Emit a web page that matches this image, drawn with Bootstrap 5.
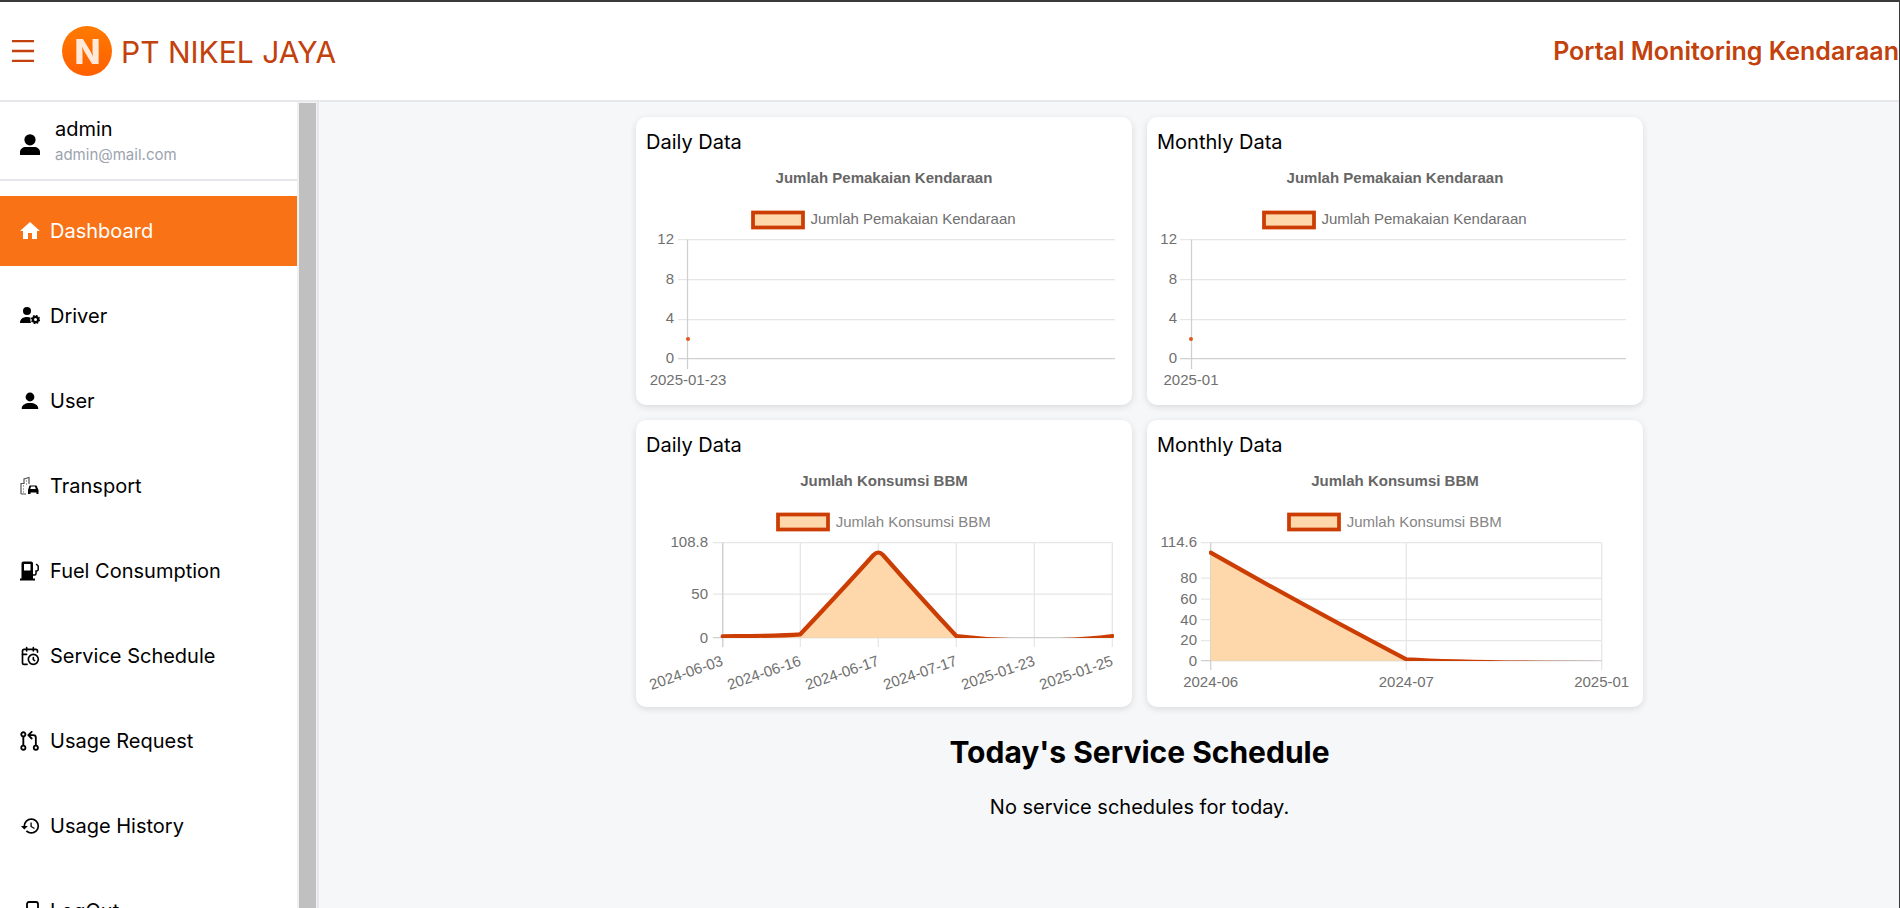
<!DOCTYPE html>
<html lang="en">
<head>
  <meta charset="UTF-8">
  <meta name="viewport" content="width=device-width, initial-scale=1.0">
  <title>Portal Monitoring Kendaraan</title>
  <link href="https://cdn.jsdelivr.net/npm/bootstrap@5.3.3/dist/css/bootstrap.min.css" rel="stylesheet">
  <style>
    html, body { height: 100%; overflow: hidden; }
    body { font-family: Inter, "Liberation Sans", sans-serif; color: #000; background: #f6f7f9; border-top: 2px solid #3a3a3a; border-right: 1px solid #3a3a3a; }
    .top-bar { height: 100px; background: #fff; border-bottom: 2px solid #e5e7eb; color: #c2410c; }
    .menu-btn { width: 22px; margin-left: 12px; margin-right: 28px; }
    .brand-name { font-size: 30px; line-height: 36px; margin-left: 9px; padding-top: 2px; }
    .portal-name { font-size: 25px; font-weight: 600; padding-top: 2px; }
    .shell { height: calc(100% - 100px); }
    .side-pane { width: 319px; background: #fff; border-right: 2px solid #e5e7eb; }
    .side-inner { width: 297px; }
    .side-track { width: 20px; background: #f1f1f1; padding: 1px 1px 0 2px; }
    .side-thumb { height: 100%; background: #c0c0c0; }
    .user-box { height: 79px; border-bottom: 2px solid #e5e7eb; padding-left: 20px; }
    .user-name { font-size: 20px; line-height: 30px; margin-top: 12px; }
    .user-mail { font-size: 15px; line-height: 22px; color: #9ca3af; }
    .user-text { margin-left: 15px; }
    .side-list { padding-top: 15px; gap: 15px; }
    .side-link { height: 70px; font-size: 20px; color: #000; padding-left: 20px; gap: 10px; }
    .side-link.is-active { background: #f97316; color: #fff; }
    .side-link svg { width: 20px; height: 20px; flex: none; }
    .main-pane { padding: 15px 0 0 61px; }
    .chart-grid { display: grid; grid-template-columns: 496px 496px; gap: 15px; width: 1007px; }
    .chart-card { background: #fff; border-radius: 10px; padding: 10px; box-shadow: 0 2px 7px rgba(0,0,0,.12); border: 0; }
    .chart-label { font-size: 20px; line-height: 30px; }
    .chart-card svg { display: block; width: 476px; }
    .chart-h1 { height: 238px; }
    .chart-h2 { height: 237px; }
    .chart-card text { font-family: "Liberation Sans", Arial, sans-serif; font-size: 15px; fill: #707070; }
    .chart-card text.chart-title { font-weight: 700; fill: #666; }
    .chart-card text.legend-soft { fill: #858585; }
    .grid-line { stroke: #e6e6e6; stroke-width: 1.25; fill: none; }
    .axis-line { stroke: #cfcfcf; stroke-width: 1.25; fill: none; }
    .legend-box { fill: #fed7aa; stroke: #cc3d04; stroke-width: 3.75; }
    .area-fill { fill: #fed7aa; stroke: none; }
    .area-line { fill: none; stroke: #cc3d04; stroke-width: 4.2; stroke-linejoin: round; stroke-linecap: round; }
    .today-title { font-size: 30px; font-weight: 700; line-height: 36px; margin-top: 27px; }
    .today-note { font-size: 20px; line-height: 30px; margin-top: 22px; }
  </style>
</head>
<body>
  <nav class="top-bar d-flex align-items-center justify-content-between">
    <div class="d-flex align-items-center">
      <svg class="menu-btn" viewBox="0 0 22 22" height="22" aria-hidden="true"><path d="M0 1h22M0 11h22M0 21h22" stroke="#c2410c" stroke-width="2.500"/></svg>
      <svg width="50" height="50" viewBox="0 0 50 50" aria-hidden="true">
        <defs>
          <linearGradient id="logoFill" x1="0" y1="0" x2="0" y2="1"><stop offset="0" stop-color="#ff7a00"/><stop offset="1" stop-color="#ff5f00"/></linearGradient>
          <filter id="logoBlur"><feGaussianBlur stdDeviation=".5"/></filter>
        </defs>
        <circle cx="25" cy="25" r="25" fill="url(#logoFill)"/>
        <text x="25.500" y="37.500" text-anchor="middle" font-family="Inter, sans-serif" font-weight="800" font-size="34" fill="#fff" fill-opacity=".85" filter="url(#logoBlur)">N</text>
      </svg>
      <span class="brand-name">PT NIKEL JAYA</span>
    </div>
    <span class="portal-name">Portal Monitoring Kendaraan</span>
  </nav>

  <div class="shell d-flex">
    <aside class="side-pane d-flex flex-shrink-0">
      <div class="side-inner overflow-hidden">
        <div class="user-box d-flex">
          <svg class="align-self-center mt-2" width="20" height="21" viewBox="0 0 20 21" aria-hidden="true"><circle cx="10" cy="5.800" r="5.600"/><path d="M0 21v-3c0-3 3-5 5.500-5h9c2.500 0 5.500 2 5.500 5v3z"/></svg>
          <div class="user-text">
            <div class="user-name">admin</div>
            <div class="user-mail">admin@mail.com</div>
          </div>
        </div>
        <div class="side-list d-flex flex-column">
          <a class="side-link is-active d-flex align-items-center text-decoration-none" href="#">
            <svg viewBox="2 2 20 20" fill="currentColor"><path d="M10 20v-6h4v6h5v-8h3L12 3 2 12h3v8z"/></svg>Dashboard</a>
          <a class="side-link d-flex align-items-center text-decoration-none" href="#">
            <svg viewBox="0 0 20 20"><circle cx="7" cy="5" r="4"/><path d="M0 17c0-4 3-6 7-6 1.500 0 2.700.3 3.700.8A6 6 0 0 0 11 17z"/><circle cx="15.500" cy="13.500" r="2.600" fill="none" stroke="#000" stroke-width="2.200"/><circle cx="15.500" cy="13.500" r="4" fill="none" stroke="#000" stroke-width="1.300" stroke-dasharray="1.700 1.440"/></svg>Driver</a>
          <a class="side-link d-flex align-items-center text-decoration-none" href="#">
            <svg viewBox="0 0 20 20"><circle cx="10" cy="6" r="4.400"/><path d="M2.500 18c-.6 0-.9-.4-.8-1 .5-3 3.500-5 8.300-5s7.800 2 8.300 5c.1.600-.2 1-.8 1z"/></svg>User</a>
          <a class="side-link d-flex align-items-center text-decoration-none" href="#">
            <svg viewBox="0 0 20 20"><path d="M1 18V7.500h3V3l5-1.500V8M1 18h5" fill="none" stroke="#555" stroke-width="1.200"/><path d="M3 10h1M3 13h1M3 16h1M6 5h1M6 8h1" stroke="#555" stroke-width="1.200"/><path d="M8 18v-4l1.500-4.500h7L18.500 14v4h-2v-1.500h-6V18zm2.300-5h5.500l-.8-2.400h-4z" fill-rule="evenodd"/></svg>Transport</a>
          <a class="side-link d-flex align-items-center text-decoration-none" href="#">
            <svg viewBox="0 0 20 20"><path fill-rule="evenodd" d="M1.500 18V2.500C1.500 1.300 2.300.5 3.500.5h7.500c1.200 0 2 .8 2 2V18zm2.500-15v6.500h6.500V3z"/><path d="M0 17.500h15V19.500H0z"/><path d="M13 14h1.700c.8 0 1.300-.4 1.300-1.200V10h.8c.8 0 1.400-.6 1.400-1.400V5l-2-2" fill="none" stroke="#000" stroke-width="1.500"/></svg>Fuel Consumption</a>
          <a class="side-link d-flex align-items-center text-decoration-none" href="#">
            <svg viewBox="0 0 24 24" fill="none" stroke="#000" stroke-width="2" stroke-linecap="round" stroke-linejoin="round"><path d="M21 7.500V6a2 2 0 0 0-2-2H5a2 2 0 0 0-2 2v14a2 2 0 0 0 2 2h3.500"/><path d="M16 2v4M8 2v4M3 10h5M17.500 17.500 16 16.300V14"/><circle cx="16" cy="16" r="6"/></svg>Service Schedule</a>
          <a class="side-link d-flex align-items-center text-decoration-none" href="#">
            <svg viewBox="0 0 24 24" fill="none" stroke="#000" stroke-width="2.200" stroke-linecap="round" stroke-linejoin="round"><circle cx="19" cy="20" r="2.500"/><circle cx="4" cy="4" r="2.500"/><circle cx="4" cy="20" r="2.500"/><path d="M4 7v10M19 17V8a3 3 0 0 0-3-3h-5M14 9l-4-4 4-4"/></svg>Usage Request</a>
          <a class="side-link d-flex align-items-center text-decoration-none" href="#">
            <svg viewBox="0 1 23 22"><path d="M13 3a9 9 0 0 0-9 9H1l3.890 3.890.07.14L9 12H6c0-3.870 3.130-7 7-7s7 3.130 7 7-3.130 7-7 7c-1.930 0-3.680-.79-4.940-2.060l-1.420 1.420A8.954 8.954 0 0 0 13 21a9 9 0 0 0 0-18zm-1 5v5l4.280 2.540.72-1.210-3.500-2.080V8H12z"/></svg>Usage History</a>
          <a class="side-link d-flex align-items-center text-decoration-none" href="#">
            <svg viewBox="0 0 20 20" fill="none" stroke="#000" stroke-width="1.800"><path d="M7 19V3a2 2 0 0 1 2-2h7a2 2 0 0 1 2 2v16"/><path d="M1 10h9m-3-3 3 3-3 3"/></svg>LogOut</a>
        </div>
      </div>
      <div class="side-track"><div class="side-thumb"></div></div>
    </aside>

    <main class="main-pane flex-grow-1 text-center">
      <div class="chart-grid mx-auto text-start">
        <div class="card chart-card">
          <div class="chart-label">Daily Data</div>
          <svg class="chart-h1" viewBox="646 157 476 238">
            <text class="chart-title" x="884" y="183" text-anchor="middle">Jumlah Pemakaian Kendaraan</text>
            <rect class="legend-box" x="753" y="212.500" width="50" height="15"/>
            <text x="810.500" y="224">Jumlah Pemakaian Kendaraan</text>
            <path class="grid-line" d="M678 239.500H1115M678 279.500H1115M678 319.500H1115"/>
            <path class="axis-line" d="M678 358.500H1115M687.500 239.500V369"/>
            <text text-anchor="end" x="674" y="243.500">12</text>
            <text text-anchor="end" x="674" y="283.500">8</text>
            <text text-anchor="end" x="674" y="323">4</text>
            <text text-anchor="end" x="674" y="362.500">0</text>
            <circle cx="688" cy="339" r="2" fill="#e2561c"/>
            <text text-anchor="middle" x="688" y="385">2025-01-23</text>
          </svg>
        </div>
        <div class="card chart-card">
          <div class="chart-label">Monthly Data</div>
          <svg class="chart-h1" viewBox="1157 157 476 238">
            <text class="chart-title" x="1395" y="183" text-anchor="middle">Jumlah Pemakaian Kendaraan</text>
            <rect class="legend-box" x="1264" y="212.500" width="50" height="15"/>
            <text x="1321.500" y="224">Jumlah Pemakaian Kendaraan</text>
            <path class="grid-line" d="M1180 239.500H1626M1180 279.500H1626M1180 319.500H1626"/>
            <path class="axis-line" d="M1180 358.500H1626M1191.500 239.500V369"/>
            <text text-anchor="end" x="1177" y="243.500">12</text>
            <text text-anchor="end" x="1177" y="283.500">8</text>
            <text text-anchor="end" x="1177" y="323">4</text>
            <text text-anchor="end" x="1177" y="362.500">0</text>
            <circle cx="1191" cy="339" r="2" fill="#e2561c"/>
            <text text-anchor="middle" x="1191" y="385">2025-01</text>
          </svg>
        </div>
        <div class="card chart-card">
          <div class="chart-label">Daily Data</div>
          <svg class="chart-h2" viewBox="646 460 476 237">
            <defs><clipPath id="dailyClip"><rect x="720" y="540" width="394" height="98"/></clipPath></defs>
            <text class="chart-title" x="884" y="485.500" text-anchor="middle">Jumlah Konsumsi BBM</text>
            <rect class="legend-box" x="778" y="514.500" width="50" height="15"/>
            <text class="legend-soft" x="835.700" y="526.500">Jumlah Konsumsi BBM</text>
            <path class="grid-line" d="M713 542.500H1112.500M713 594H1112.500M722.700 542.500V647M800.300 542.500V647M878.300 542.500V647M956.300 542.500V647M1034.300 542.500V647M1112.300 542.500V647"/>
            <path class="axis-line" d="M713 637.700H1112.500M722.700 542.500V647"/>
            <path class="area-fill" d="M722.700 636.300C750 636 780 636 800.300 634.300C825 608 853 578 873.500 555Q878.300 550 883 555C905 580 932 610 956.300 636C985 638 1010 638 1034.300 637.700C1060 638 1090 637.500 1112.300 636V637.700H722.700Z"/>
            <path class="area-line" clip-path="url(#dailyClip)" d="M722.700 636.300C750 636 780 636 800.300 634.300C825 608 853 578 873.500 555Q878.300 550 883 555C905 580 932 610 956.300 636C985 639.500 1010 640.500 1034.300 640.500C1060 640.500 1090 639 1112.300 636"/>
            <text text-anchor="end" x="708" y="547">108.8</text>
            <text text-anchor="end" x="708" y="598.500">50</text>
            <text text-anchor="end" x="708" y="642.500">0</text>
            <text text-anchor="end" transform="translate(724 665) rotate(-19)">2024-06-03</text>
            <text text-anchor="end" transform="translate(802 665) rotate(-19)">2024-06-16</text>
            <text text-anchor="end" transform="translate(880 665) rotate(-19)">2024-06-17</text>
            <text text-anchor="end" transform="translate(958 665) rotate(-19)">2024-07-17</text>
            <text text-anchor="end" transform="translate(1036 665) rotate(-19)">2025-01-23</text>
            <text text-anchor="end" transform="translate(1114 665) rotate(-19)">2025-01-25</text>
          </svg>
        </div>
        <div class="card chart-card">
          <div class="chart-label">Monthly Data</div>
          <svg class="chart-h2" viewBox="1157 460 476 237">
            <defs><clipPath id="monthClip"><rect x="1209" y="540" width="394" height="121"/></clipPath></defs>
            <text class="chart-title" x="1395" y="485.500" text-anchor="middle">Jumlah Konsumsi BBM</text>
            <rect class="legend-box" x="1289" y="514.500" width="50" height="15"/>
            <text class="legend-soft" x="1346.700" y="526.500">Jumlah Konsumsi BBM</text>
            <path class="grid-line" d="M1201 542.500H1601.700M1201 578H1601.700M1201 599H1601.700M1201 619.700H1601.700M1201 640.700H1601.700M1406.300 542.500V670M1601.700 542.500V670"/>
            <path class="axis-line" d="M1201 660.700H1601.700M1210.700 542.500V670"/>
            <path class="area-fill" d="M1210.700 552.700C1280 592 1350 630 1406.300 659.300C1450 661 1550 661 1601.700 660.700H1210.700Z"/>
            <path class="area-line" clip-path="url(#monthClip)" d="M1210.700 552.700C1280 592 1350 630 1406.300 659.300C1450 662 1550 663 1601.700 663"/>
            <text text-anchor="end" x="1197" y="547">114.6</text>
            <text text-anchor="end" x="1197" y="582.500">80</text>
            <text text-anchor="end" x="1197" y="603.500">60</text>
            <text text-anchor="end" x="1197" y="624.500">40</text>
            <text text-anchor="end" x="1197" y="644.500">20</text>
            <text text-anchor="end" x="1197" y="665.500">0</text>
            <text text-anchor="middle" x="1210.700" y="687">2024-06</text>
            <text text-anchor="middle" x="1406.300" y="687">2024-07</text>
            <text text-anchor="middle" x="1601.700" y="687">2025-01</text>
          </svg>
        </div>
      </div>
      <h2 class="today-title">Today's Service Schedule</h2>
      <p class="today-note">No service schedules for today.</p>
    </main>
  </div>

  <script src="https://cdn.jsdelivr.net/npm/bootstrap@5.3.3/dist/js/bootstrap.bundle.min.js"></script>
</body>
</html>
